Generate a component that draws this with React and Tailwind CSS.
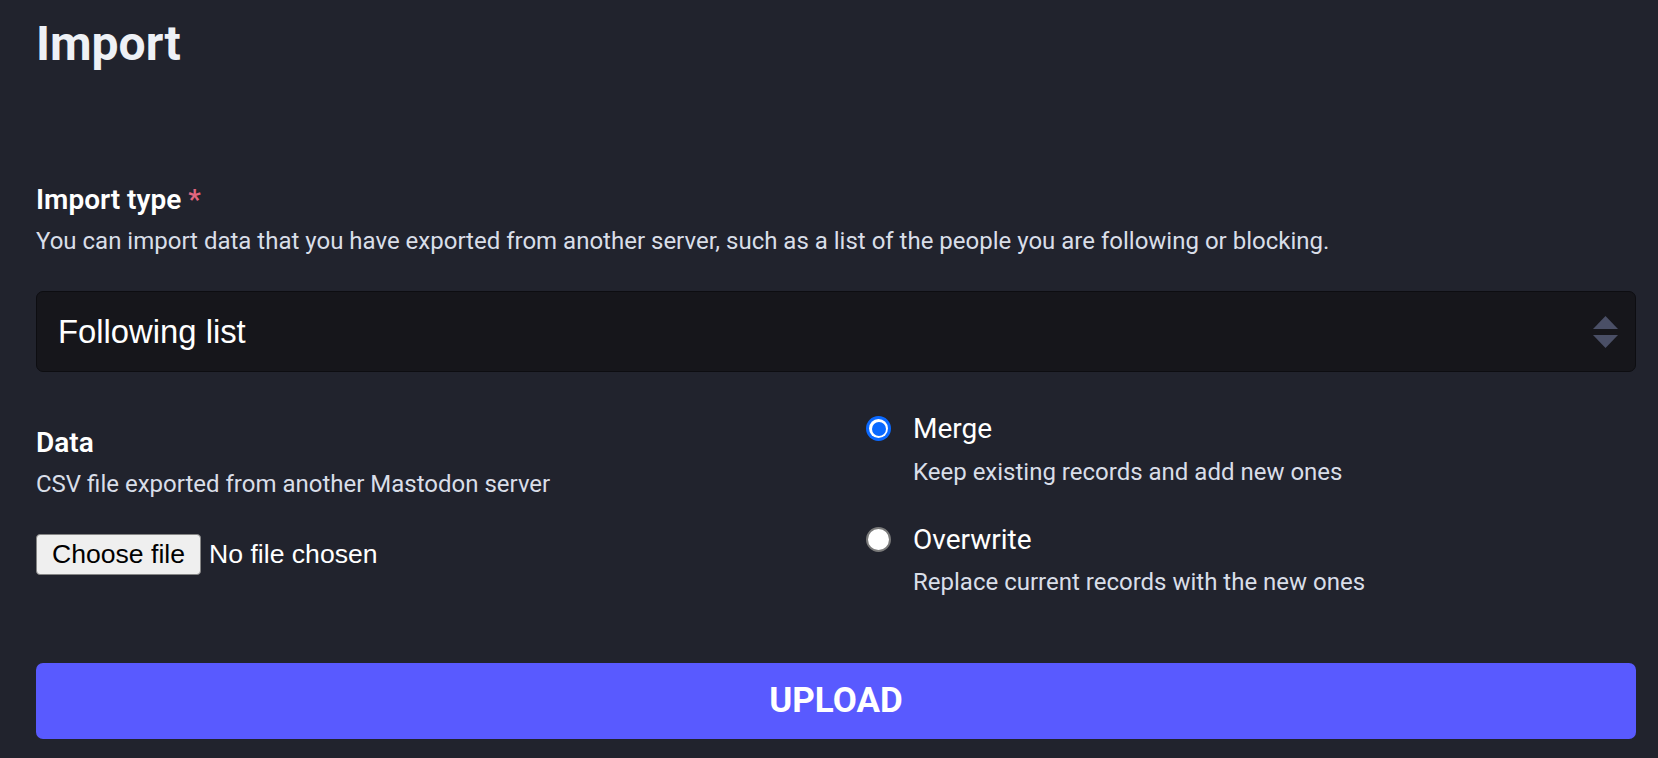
export default function App() {
  return (
    <div className="min-h-screen w-full bg-[#21232d] pl-[36px] pr-[22px] pt-[15px] font-[family-name:Roboto,sans-serif]">
      <h1 className="text-[48px] leading-[57px] font-bold text-[#eef1f6]">Import</h1>

      <div className="mt-[111px]">
        <div className="text-[28px] leading-[33px] font-semibold text-white">
          Import type <span className="text-[#e0667f]">*</span>
        </div>
        <div className="mt-[11px] text-[24px] leading-[29px] text-[#d9dee8]">
          You can import data that you have exported from another server, such as a list of the people you are following or blocking.
        </div>
      </div>

      <div className="mt-[35px] flex h-[81px] items-center justify-between rounded-[7px] border border-[#0d0d11] bg-[#16161b] pl-[21px] pr-[17px]">
        <span className="font-[family-name:'Liberation_Sans',Arial,sans-serif] text-[32.8px] text-white">Following list</span>
        <svg width="25" height="32" viewBox="0 0 25 32" className="block">
          <polygon points="12.5,0 25,13 0,13" fill="#4a4f66" />
          <polygon points="0,19 25,19 12.5,32" fill="#4a4f66" />
        </svg>
      </div>

      <div className="mt-[40px] grid grid-cols-2 gap-[60px]">
        <div className="pt-[14px]">
          <div className="text-[28px] leading-[33px] font-semibold text-white">Data</div>
          <div className="mt-[11px] text-[24px] leading-[29px] text-[#d9dee8]">CSV file exported from another Mastodon server</div>
          <div className="mt-[35px] flex items-center font-[family-name:'Liberation_Sans',Arial,sans-serif] text-[26.6px]">
            <div className="flex h-[41px] items-center rounded-[4px] border border-[#858585] bg-[#efefef] px-[15px] text-black">
              Choose file
            </div>
            <span className="ml-[8px] text-white">No file chosen</span>
          </div>
        </div>

        <div>
          <div className="flex h-[33px] items-center">
            <div className="flex h-[25px] w-[25px] items-center justify-center rounded-full bg-[#0b69ff]">
              <div className="flex h-[19px] w-[19px] items-center justify-center rounded-full bg-white">
                <div className="h-[14px] w-[14px] rounded-full bg-[#0b69ff]" />
              </div>
            </div>
            <span className="ml-[22px] text-[28px] leading-[33px] text-white">Merge</span>
          </div>
          <div className="mt-[13px] pl-[47px] text-[24px] leading-[29px] text-[#d9dee8]">Keep existing records and add new ones</div>

          <div className="mt-[36px] flex h-[33px] items-center">
            <div className="h-[25px] w-[25px] rounded-full border-2 border-[#7a7a7a] bg-white" />
            <span className="ml-[22px] text-[28px] leading-[33px] text-white">Overwrite</span>
          </div>
          <div className="mt-[12px] pl-[47px] text-[24px] leading-[29px] text-[#d9dee8]">Replace current records with the new ones</div>
        </div>
      </div>

      <button className="mt-[66px] block h-[76px] w-full rounded-[7px] bg-[#595aff] text-center text-[35px] font-bold uppercase text-white">
        Upload
      </button>
    </div>
  );
}
